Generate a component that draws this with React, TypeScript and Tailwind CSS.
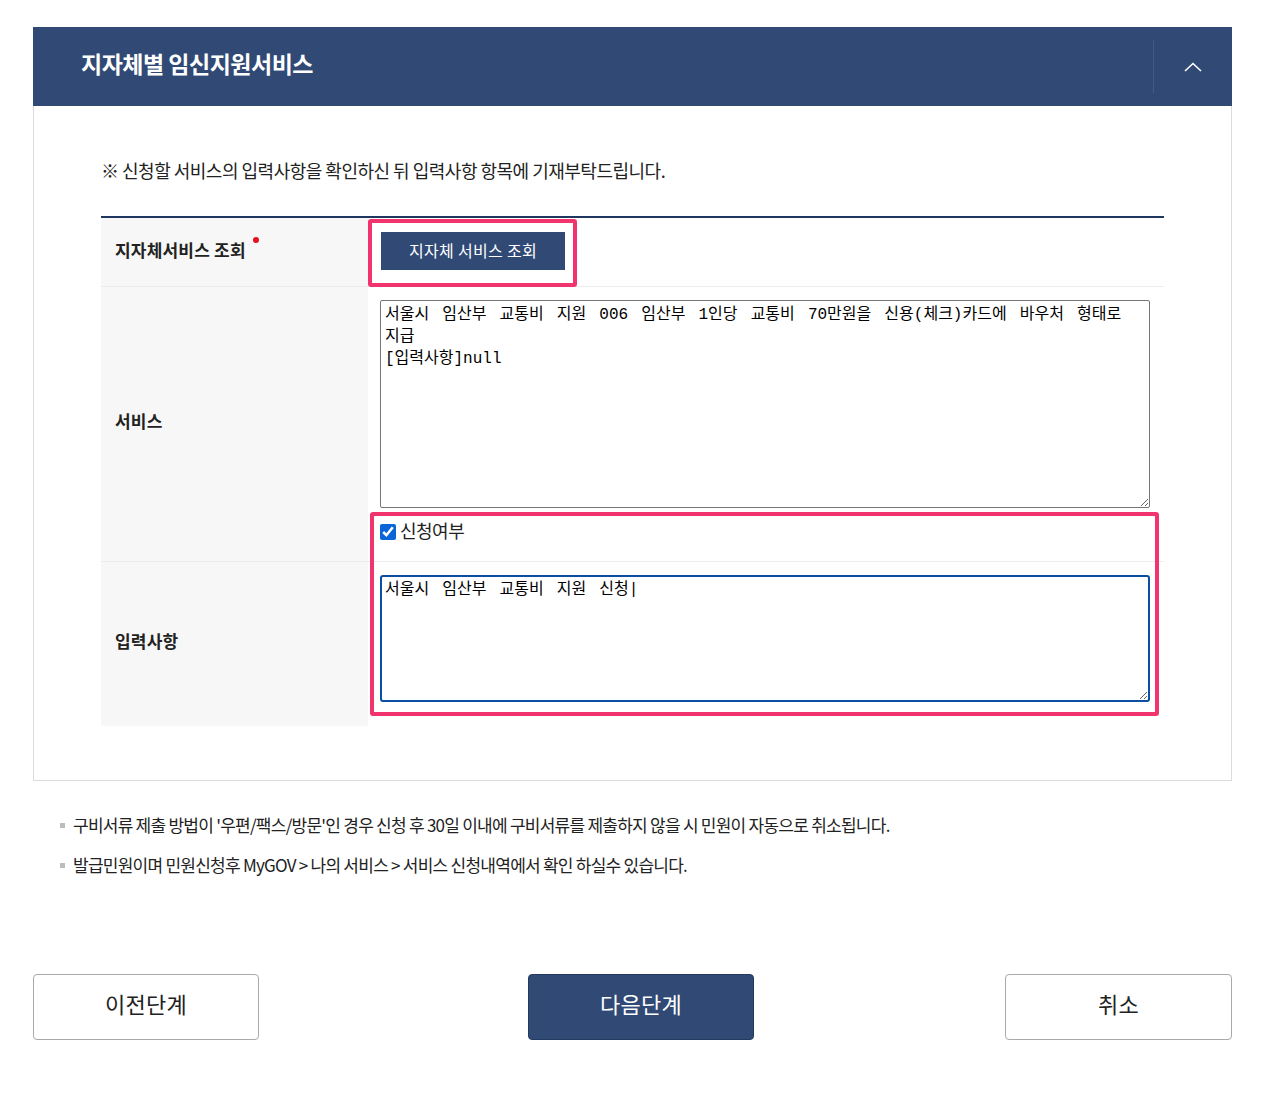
import React from "react";

const KR = { fontFamily: '"Noto Sans CJK KR", "Noto Sans", sans-serif' };
const MONO = { fontFamily: '"Liberation Mono", "Noto Sans CJK KR", monospace' };

export default function App() {
  return (
    <div className="min-h-screen bg-white pt-[27px] pb-[53px] text-[#222]" style={KR}>
      <div className="ml-[33px] w-[1199px]">
        {/* 헤더 */}
        <div className="flex h-[79px] items-center bg-[#304a75] pl-[48px]">
          <h2 className="flex-1 pb-[6px] text-[23px] font-bold tracking-[-0.5px] text-white">지자체별 임신지원서비스</h2>
          <div className="h-[53px] w-px bg-[#415c86]" />
          <button className="flex h-full w-[78px] items-center justify-center">
            <svg width="18" height="10" viewBox="0 0 18 10" fill="none">
              <polyline points="1,9 9,1.5 17,9" stroke="white" strokeWidth="1.6" />
            </svg>
          </button>
        </div>

        {/* 본문 */}
        <div className="border-x border-b border-[#dcdcdc] px-[67px] pt-[51px] pb-[54px]">
          <p className="text-[18px] leading-[26px] tracking-[-0.5px]">
            ※ 신청할 서비스의 입력사항을 확인하신 뒤 입력사항 항목에 기재부탁드립니다.
          </p>

          <div className="relative mt-[33px] border-t-2 border-[#1f3661]">
            {/* 지자체서비스 조회 */}
            <div className="flex border-b border-[#ececec]">
              <div className="flex w-[267px] items-center bg-[#f7f7f7] pb-[4px] pl-[14px]">
                <span className="text-[17px] font-bold tracking-[0.2px]">지자체서비스 조회</span>
                <span className="relative -top-[10px] ml-[7px] h-[6px] w-[6px] rounded-full bg-[#e8101b]" />
              </div>
              <div className="flex-1 pt-[14px] pb-[16px] pl-[13px]">
                <button className="h-[38px] w-[184px] bg-[#304a75] pb-[3px] text-[16px] tracking-[0.3px] text-white">
                  지자체 서비스 조회
                </button>
              </div>
            </div>

            {/* 서비스 */}
            <div className="flex border-b border-[#ececec]">
              <div className="flex w-[267px] items-center bg-[#f7f7f7] pb-[6px] pl-[14px]">
                <span className="text-[17px] font-bold tracking-[0.2px]">서비스</span>
              </div>
              <div className="flex-1 pt-[13px] pr-[13px] pb-[16px] pl-[12px]">
                <textarea
                  readOnly
                  className="block h-[208px] w-[770px] resize-y rounded-[2px] border border-[#767676] px-[4px] pt-[3px] pb-[1px] text-[16px] leading-[22px] text-black outline-none [word-spacing:3.5px]"
                  style={MONO}
                  value={"서울시 임산부 교통비 지원 006 임산부 1인당 교통비 70만원을 신용(체크)카드에 바우처 형태로\n지급\n[입력사항]null"}
                />
                <label className="mt-[10px] flex h-[27px] items-center gap-[4px] pb-[3px] text-[18px] tracking-[-0.5px]">
                  <input type="checkbox" defaultChecked className="mt-[3px] h-[16px] w-[16px] accent-[#0b64d8]" />
                  신청여부
                </label>
              </div>
            </div>

            {/* 입력사항 */}
            <div className="flex">
              <div className="flex w-[267px] items-center bg-[#f7f7f7] pb-[6px] pl-[14px]">
                <span className="text-[17px] font-bold tracking-[0.2px]">입력사항</span>
              </div>
              <div className="flex-1 pt-[13px] pr-[13px] pb-[24px] pl-[12px]">
                <textarea
                  readOnly
                  className="block h-[127px] w-[770px] resize-y rounded-[3px] border-2 border-[#0b4fa3] px-[3px] pt-[2px] pb-0 text-[16px] leading-[22px] text-black outline-none [word-spacing:3.5px]"
                  style={MONO}
                  value="서울시 임산부 교통비 지원 신청|"
                />
              </div>
            </div>

            {/* 강조 표시 */}
            <div className="pointer-events-none absolute top-[1px] left-[267px] h-[68px] w-[209px] rounded-[3px] border-4 border-[#f1336e]" />
            <div className="pointer-events-none absolute top-[294px] left-[269px] h-[204px] w-[789px] rounded-[3px] border-4 border-[#f1336e]" />
          </div>
        </div>

        {/* 안내 */}
        <ul className="mt-[31px] pl-[27px] text-[17px] leading-[26px] tracking-[-0.75px]">
          <li className="flex items-center gap-[8px]">
            <span className="h-[5px] w-[5px] bg-[#bdbdbd]" />
            구비서류 제출 방법이 '우편/팩스/방문'인 경우 신청 후 30일 이내에 구비서류를 제출하지 않을 시 민원이 자동으로 취소됩니다.
          </li>
          <li className="mt-[14px] flex items-center gap-[8px]">
            <span className="h-[5px] w-[5px] bg-[#bdbdbd]" />
            발급민원이며 민원신청후 MyGOV &gt; 나의 서비스 &gt; 서비스 신청내역에서 확인 하실수 있습니다.
          </li>
        </ul>

        {/* 버튼 */}
        <div className="mt-[96px] flex">
          <button className="h-[66px] w-[226px] rounded-[4px] border border-[#aaaaaa] bg-white pb-[8px] text-[22px] tracking-[0.2px] text-[#222]">
            이전단계
          </button>
          <button className="ml-[269px] h-[66px] w-[226px] rounded-[4px] border border-[#233a60] bg-[#304a75] pb-[8px] text-[22px] tracking-[0.2px] text-white">
            다음단계
          </button>
          <button className="ml-[251px] h-[66px] w-[227px] rounded-[4px] border border-[#aaaaaa] bg-white pb-[8px] text-[22px] tracking-[0.2px] text-[#222]">
            취소
          </button>
        </div>
      </div>
    </div>
  );
}
